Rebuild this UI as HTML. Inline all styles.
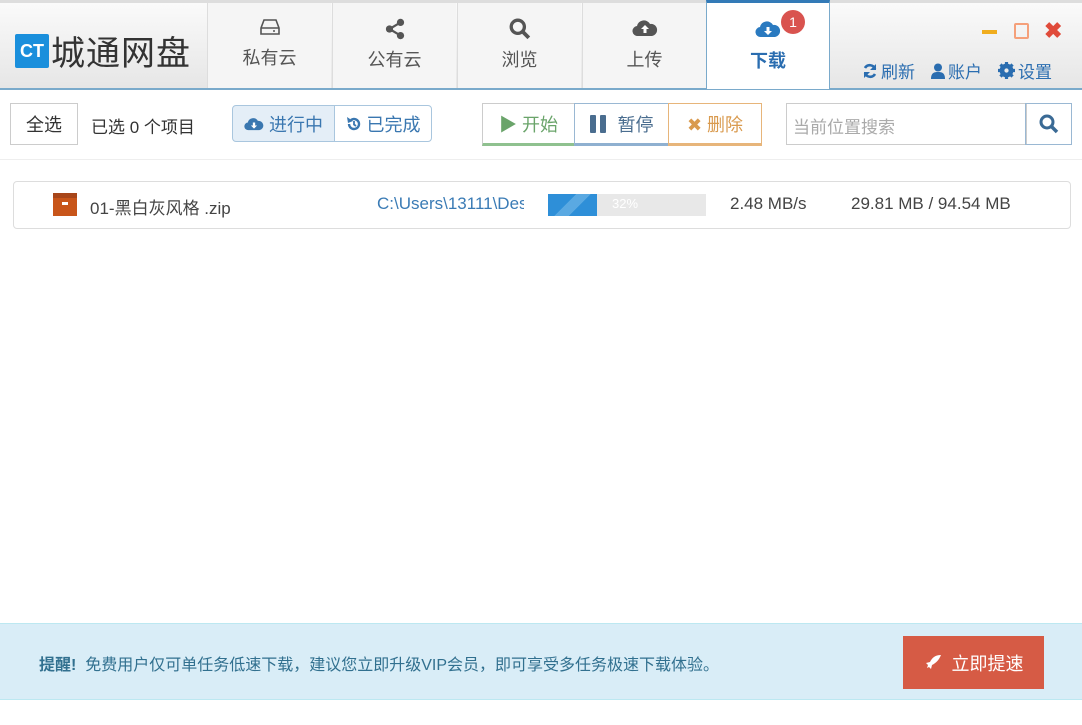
<!DOCTYPE html>
<html><head><meta charset="utf-8"><style>
*{box-sizing:border-box;margin:0;padding:0}
body{width:1082px;height:725px;background:#fff;font-family:"Liberation Sans","Noto Sans CJK SC",sans-serif;color:#333;position:relative;overflow:hidden}
.hdr{position:absolute;left:0;top:0;width:1082px;height:90px;background:linear-gradient(#fafafa,#e6e6e6);border-top:3px solid #ddd;border-bottom:2px solid #7aaacb}
.logo{position:absolute;left:15px;top:26px;display:flex;align-items:center}
.ct{background:#1a8fdc;color:#fff;font-weight:bold;font-size:18px;width:34px;height:34px;line-height:34px;text-align:center;border-radius:2px}
.lt{font-size:34px;color:#333;margin-left:2px;letter-spacing:1px}
.tab{position:absolute;top:3px;width:124px;height:85px;background:#f5f5f5;border-left:1px solid #ddd;text-align:center;font-size:18px;color:#555}
.tab svg{display:block;margin:15px auto 0}
.tab span{display:block;margin-top:8px}
.tab.act{background:#fff;border-top:3px solid #337ab7;border-left:1px solid #7aaacb;border-right:1px solid #7aaacb;height:89px;top:0;color:#2a6db0;font-weight:bold}
.badge{position:absolute;left:74px;top:7px;width:24px;height:24px;border-radius:50%;background:#d9534f;color:#fff;font-size:14px;line-height:24px;font-weight:normal}
.btn{position:absolute;border:1px solid #ccc;font-size:18px;display:flex;align-items:center;justify-content:center}
.btn svg{margin-right:5px}
</style></head><body>
<div class="hdr"></div>
<div class="logo"><div class="ct">CT</div><div class="lt">城通网盘</div></div>
<div class="tab" style="left:207px"><svg width="20" height="18" viewBox="0 0 20 18"><path d="M4 2h12l3 8v6H1v-6z M1 10h18" fill="none" stroke="#555" stroke-width="1.6"/><circle cx="14" cy="13" r="1" fill="#555"/></svg><span>私有云</span></div>
<div class="tab" style="left:332px"><svg width="22" height="22" viewBox="0 0 20 20"><circle cx="15" cy="4" r="3.3" fill="#555"/><circle cx="5" cy="10" r="3.3" fill="#555"/><circle cx="15" cy="16" r="3.3" fill="#555"/><path d="M15 4L5 10L15 16" stroke="#555" stroke-width="2" fill="none"/></svg><span style="margin-top:6px">公有云</span></div>
<div class="tab" style="left:457px"><svg width="22" height="22" viewBox="0 0 20 20"><circle cx="8" cy="8" r="6" fill="none" stroke="#555" stroke-width="3"/><path d="M12 12l6 6" stroke="#555" stroke-width="3.5"/></svg><span style="margin-top:6px">浏览</span></div>
<div class="tab" style="left:582px"><svg width="26" height="20" viewBox="0 0 26 20"><path d="M6 18a5 5 0 0 1-1-10a7 7 0 0 1 13-2a6 6 0 0 1 2 12z" fill="#555"/><path d="M13 7l-4 4h2.5v4h3v-4H17z" fill="#fff"/></svg><span>上传</span></div>
<div class="tab act" style="left:706px"><svg width="26" height="20" viewBox="0 0 26 20" style="margin-top:16px"><path d="M6 18a5 5 0 0 1-1-10a7 7 0 0 1 13-2a6 6 0 0 1 2 12z" fill="#2a7ac0"/><path d="M13 16l-4-4h2.5V8h3v4H17z" fill="#fff"/></svg><span>下载</span><div class="badge">1</div></div>
<div style="position:absolute;left:982px;top:30px;width:15px;height:4px;background:#f0ad1e"></div>
<div style="position:absolute;left:1014px;top:23px;width:15px;height:16px;border:2px solid #f5a07a;border-radius:2px"></div>
<div style="position:absolute;left:1044px;top:18px;font-size:22px;color:#e04b3a;font-weight:bold">✖</div>
<div style="position:absolute;left:862px;top:58px;font-size:17px;color:#2a6db0;white-space:nowrap;display:flex;align-items:center">
<svg width="16" height="16" viewBox="0 0 16 16" style="margin-right:3px"><path d="M13 6A5.5 5.5 0 0 0 3 5M3 10a5.5 5.5 0 0 0 10 1" fill="none" stroke="#2a6db0" stroke-width="2.6"/><path d="M14 1v6H8z M2 15V9h6z" fill="#2a6db0"/></svg>刷新
<svg width="14" height="16" viewBox="0 0 14 16" style="margin:0 3px 0 16px"><circle cx="7" cy="4.5" r="4" fill="#2a6db0"/><path d="M0 16c0-6 3-7 7-7s7 1 7 7z" fill="#2a6db0"/></svg>账户
<svg width="17" height="17" viewBox="0 0 16 16" style="margin:0 3px 0 16px"><circle cx="8" cy="8" r="5" fill="none" stroke="#2a6db0" stroke-width="3"/><path d="M8 0v16M0 8h16M2.3 2.3l11.4 11.4M13.7 2.3L2.3 13.7" stroke="#2a6db0" stroke-width="3"/><circle cx="8" cy="8" r="2" fill="#eaeaea"/></svg>设置</div>

<div class="btn" style="left:10px;top:103px;width:68px;height:42px">全选</div>
<div style="position:absolute;left:91px;top:113px;font-size:17px">已选 0 个项目</div>
<div class="btn" style="left:232px;top:105px;width:103px;height:37px;border-color:#a9c6de;background:#e4eef7;color:#3a77b0;border-radius:4px 0 0 4px"><svg width="20" height="16" viewBox="0 0 26 20"><path d="M6 18a5 5 0 0 1-1-10a7 7 0 0 1 13-2a6 6 0 0 1 2 12z" fill="#3a77b0"/><path d="M13 16l-4-4h2.5V8h3v4H17z" fill="#fff"/></svg>进行中</div>
<div class="btn" style="left:334px;top:105px;width:98px;height:37px;border-color:#a9c6de;color:#3a77b0;border-radius:0 4px 4px 0"><svg width="16" height="16" viewBox="0 0 16 16"><path d="M3 8a5 5 0 1 0 2-4" fill="none" stroke="#3a77b0" stroke-width="2.4"/><path d="M1 1l1 6 5-2z" fill="#3a77b0"/><path d="M8 5v3.5l2 1.5" fill="none" stroke="#3a77b0" stroke-width="1.8"/></svg>已完成</div>
<div class="btn" style="left:482px;top:103px;width:93px;height:43px;border-bottom:3px solid #8fc18f;color:#6aa46a"><span style="color:#6aa46a">▶</span>&nbsp;开始</div>
<div class="btn" style="left:574px;top:103px;width:95px;height:43px;border-color:#9ab8d3;border-bottom:3px solid #8fb0d0;color:#4a6d8f"><svg width="18" height="18" viewBox="0 0 18 18"><rect x="1" y="0" width="6" height="18" rx="1" fill="#4a6d8f"/><rect x="11" y="0" width="6" height="18" rx="1" fill="#4a6d8f"/></svg>&nbsp;暂停</div>
<div class="btn" style="left:668px;top:103px;width:94px;height:43px;border-color:#e7b57a;border-bottom:3px solid #e7b57a;color:#d99a4e">✖&nbsp;删除</div>
<div style="position:absolute;left:786px;top:103px;width:241px;height:42px;border:1px solid #ccc;font-size:17px;color:#aaa;padding:9px 6px">当前位置搜索</div>
<div class="btn" style="left:1025px;top:103px;width:47px;height:42px;border-color:#9ab8d3"><svg width="20" height="20" viewBox="0 0 20 20" style="margin:0"><circle cx="8" cy="8" r="6" fill="none" stroke="#3a6a95" stroke-width="3"/><path d="M12 12l6 6" stroke="#3a6a95" stroke-width="3.5"/></svg></div>
<div style="position:absolute;left:0;top:159px;width:1082px;height:1px;background:#eee"></div>

<div style="position:absolute;left:13px;top:181px;width:1058px;height:48px;border:1px solid #ddd;border-radius:4px"></div>
<div style="position:absolute;left:53px;top:193px;width:24px;height:23px;background:#c8551a;border-top:5px solid #a8461a"><div style="width:6px;height:3px;background:#fff;margin:4px auto"></div></div>
<div style="position:absolute;left:90px;top:194px;font-size:17px;color:#444">01-黑白灰风格 .zip</div>
<div style="position:absolute;left:377px;top:194px;width:147px;overflow:hidden;white-space:nowrap;font-size:17px;color:#3a7bb5">C:\Users\13111\Desktop</div>
<div style="position:absolute;left:548px;top:194px;width:158px;height:22px;background:#e8e8e8"><div style="width:49px;height:22px;background:linear-gradient(135deg,#2e8fd8 40%,#5aa9e2 40%,#5aa9e2 60%,#2e8fd8 60%)"></div><span style="position:absolute;left:64px;top:2px;font-size:13px;color:#fff">32%</span></div>
<div style="position:absolute;left:730px;top:194px;font-size:17px;color:#444">2.48 MB/s</div>
<div style="position:absolute;left:851px;top:194px;font-size:17px;color:#444">29.81 MB / 94.54 MB</div>

<div style="position:absolute;left:0;top:623px;width:1082px;height:77px;background:#d9edf7;border-top:1px solid #bce8f1;border-bottom:1px solid #bce8f1"></div>
<div style="position:absolute;left:39px;top:651px;font-size:16px;color:#31708f"><b>提醒!</b> &nbsp;免费用户仅可单任务低速下载，建议您立即升级VIP会员，即可享受多任务极速下载体验。</div>
<div style="position:absolute;left:903px;top:636px;width:141px;height:53px;background:#d65b45;color:#fff;font-size:18px;display:flex;align-items:center;justify-content:center"><svg width="18" height="18" viewBox="0 0 18 18" style="margin-right:10px"><path d="M17 1c-6 0-9 3-11 7l-4 1 2 2-1 3 2-1 2 2 1-4c4-2 7-5 9-10z" fill="#fff"/></svg>立即提速</div>
</body></html>
